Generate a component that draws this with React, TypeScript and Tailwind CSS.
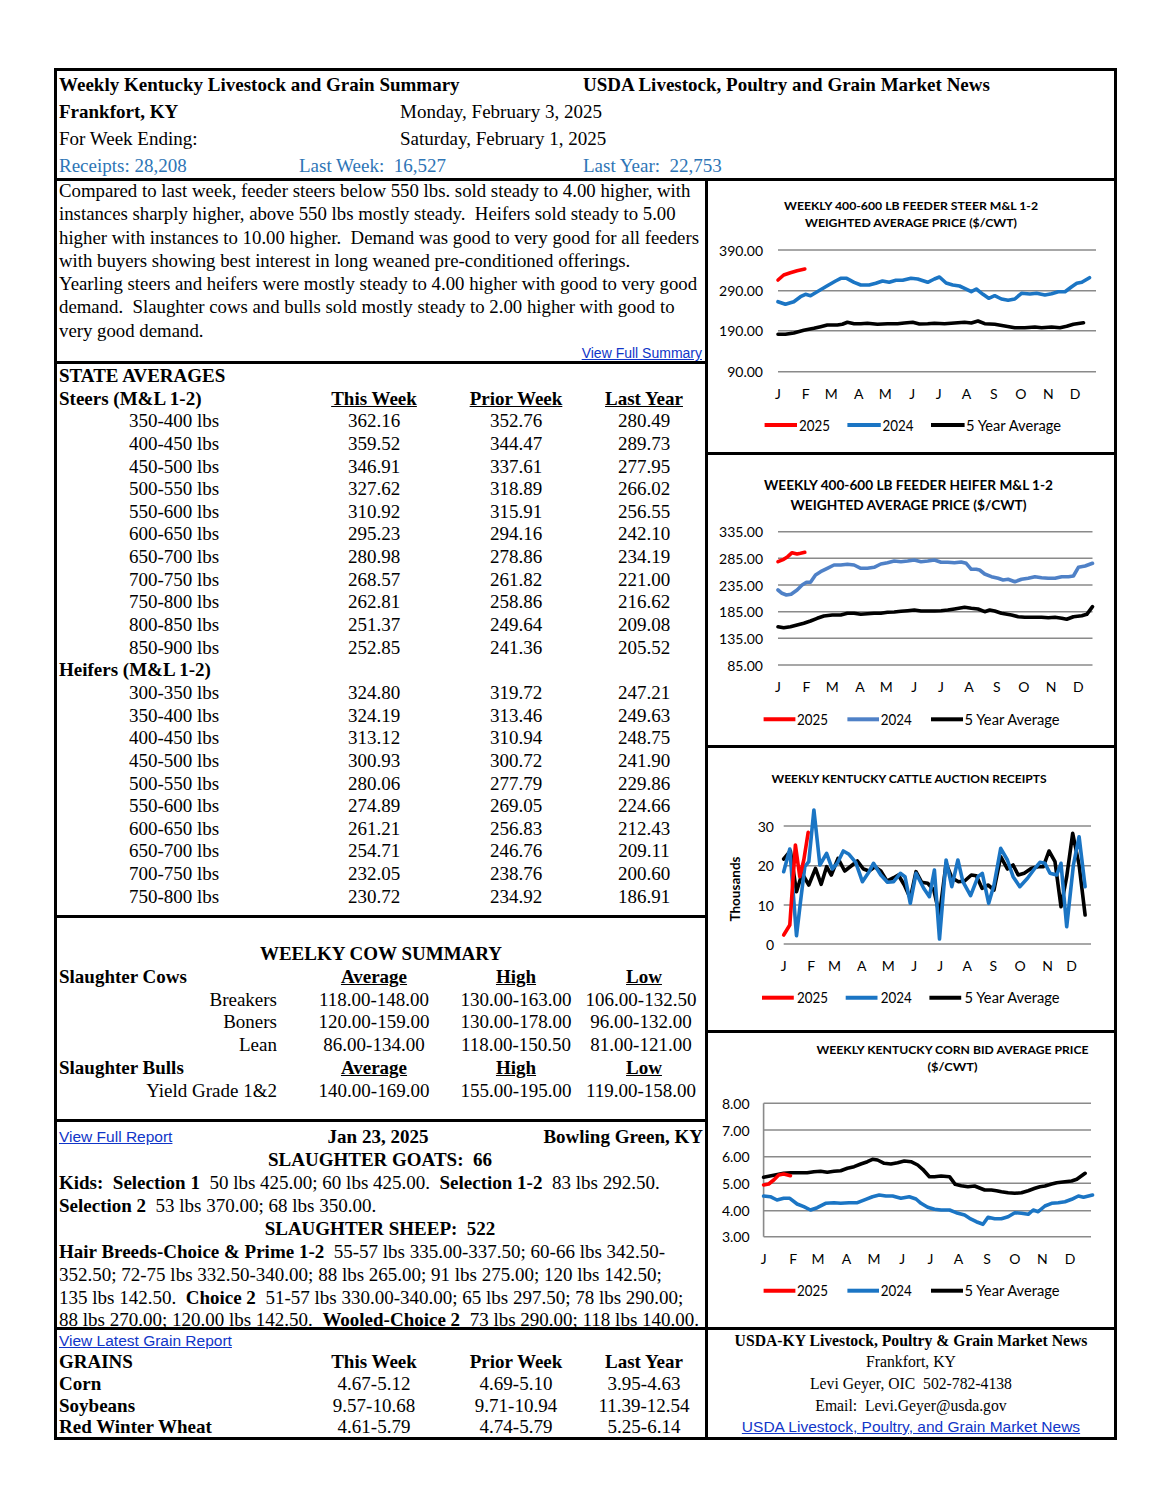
import React from "react";

type Pt = [number, number];

const SX = 2.986;
const SY = 3;

function pts(list: Pt[], dx: number, dy: number) {
  return list.map(([x, y]) => `${(x / SX + dx).toFixed(1)},${(y / SY + dy).toFixed(1)}`).join(" ");
}

type ChartProps = {
  h: number;
  titles: { t: string; x: number; y: number; len: number; size: number }[];
  yLabels: { t: string; y: number }[];
  yRight: number;
  gridX1: number;
  gridX2: number;
  axisLine?: boolean;
  months: number[];
  monthY: number;
  legendY: number;
  legend: { red: number[]; blue: number[]; black: number[] };
  blueColor: string;
  red: Pt[];
  blue: Pt[];
  black: Pt[];
  dy: number;
  thousands?: boolean;
};

const MONTHS = ["J", "F", "M", "A", "M", "J", "J", "A", "S", "O", "N", "D"];
const FONT = "Lato, 'Open Sans', sans-serif";

function Chart(p: ChartProps) {
  const dx = -8;
  return (
    <svg width={406} height={p.h} viewBox={`0 0 406 ${p.h}`} style={{ display: "block", fontFamily: FONT }}>
      {p.titles.map((t, i) => (
        <text
          key={i}
          x={t.x}
          y={t.y}
          textAnchor="middle"
          dominantBaseline="central"
          fontSize={t.size}
          fontWeight={700}
          textLength={t.len}
          lengthAdjust="spacingAndGlyphs"
          fill="#000"
        >
          {t.t}
        </text>
      ))}
      {p.yLabels.map((l, i) => (
        <g key={i}>
          <line x1={p.gridX1} x2={p.gridX2} y1={l.y} y2={l.y} stroke="#8a8a8a" strokeWidth={1.6} />
          <text x={p.yRight} y={l.y} textAnchor="end" dominantBaseline="central" fontSize={14} fill="#000">
            {l.t}
          </text>
        </g>
      ))}
      {p.axisLine && (
        <line
          x1={p.gridX1}
          x2={p.gridX1}
          y1={p.yLabels[0].y}
          y2={p.yLabels[p.yLabels.length - 1].y}
          stroke="#8a8a8a"
          strokeWidth={1.6}
        />
      )}
      {p.thousands && (
        <text
          x={27}
          y={141}
          transform="rotate(-90 27 141)"
          textAnchor="middle"
          dominantBaseline="central"
          fontSize={13.5}
          fontWeight={700}
          fill="#000"
        >
          Thousands
        </text>
      )}
      {p.months.map((x, i) => (
        <text key={i} x={x} y={p.monthY} textAnchor="middle" dominantBaseline="central" fontSize={14} fill="#000">
          {MONTHS[i]}
        </text>
      ))}
      <polyline points={pts(p.black, dx, p.dy)} fill="none" stroke="#000" strokeWidth={3.6} strokeLinejoin="round" strokeLinecap="round" />
      <polyline points={pts(p.blue, dx, p.dy)} fill="none" stroke={p.blueColor} strokeWidth={3.6} strokeLinejoin="round" strokeLinecap="round" />
      <polyline points={pts(p.red, dx, p.dy)} fill="none" stroke="#ff0000" strokeWidth={3.6} strokeLinejoin="round" strokeLinecap="round" />
      {[
        { c: "#ff0000", v: p.legend.red, t: "2025", len: 31 },
        { c: p.blueColor, v: p.legend.blue, t: "2024", len: 31 },
        { c: "#000", v: p.legend.black, t: "5 Year Average", len: 95 },
      ].map((l, i) => (
        <g key={i}>
          <line x1={l.v[0]} x2={l.v[1]} y1={p.legendY} y2={p.legendY} stroke={l.c} strokeWidth={4} />
          <text
            x={l.v[2]}
            y={p.legendY}
            dominantBaseline="central"
            fontSize={14.5}
            fill="#000"
            textLength={l.len}
            lengthAdjust="spacingAndGlyphs"
          >
            {l.t}
          </text>
        </g>
      ))}
    </svg>
  );
}

const legA = { red: [56.6, 89, 91], blue: [139.4, 172.8, 174.5], black: [223, 256.6, 258] };
const legC = { red: [54, 85.8, 89], blue: [137.7, 169.5, 172.8], black: [221.4, 253.2, 256.6] };

const chart1: ChartProps = {
  h: 271,
  dy: -6,
  titles: [
    { t: "WEEKLY 400-600 LB FEEDER STEER M&L 1-2", x: 203, y: 24, len: 254, size: 12 },
    { t: "WEIGHTED AVERAGE PRICE ($/CWT)", x: 203, y: 41.3, len: 212, size: 12 },
  ],
  yLabels: [
    { t: "390.00", y: 69 },
    { t: "290.00", y: 109.7 },
    { t: "190.00", y: 149.7 },
    { t: "90.00", y: 190.7 },
  ],
  yRight: 55,
  gridX1: 70,
  gridX2: 388,
  months: [70, 97.8, 123.3, 150.7, 177.2, 204.3, 230.8, 258.6, 285.7, 312.8, 340.3, 367],
  monthY: 212,
  legendY: 244,
  legend: legA,
  blueColor: "#1b75c4",
  red: [[233, 315], [250, 300], [270, 293], [290, 287], [313, 282]],
  blue: [
    [233, 380], [255, 388], [280, 380], [300, 365], [315, 358], [330, 362], [350, 350], [380, 332], [405, 318], [420, 310],
    [438, 310], [460, 322], [480, 330], [505, 330], [525, 325], [545, 318], [565, 322], [585, 316], [605, 316], [630, 310],
    [650, 312], [680, 322], [700, 312], [715, 306], [735, 324], [755, 330], [775, 333], [790, 340], [810, 350], [825, 342],
    [845, 358], [862, 370], [880, 362], [900, 372], [920, 376], [940, 372], [960, 355], [985, 357], [1005, 355], [1030, 360],
    [1050, 356], [1070, 350], [1090, 350], [1110, 335], [1125, 325], [1140, 322], [1163, 308],
  ],
  black: [
    [233, 478], [255, 478], [280, 474], [310, 466], [340, 460], [360, 455], [380, 450], [410, 450], [425, 448], [440, 442],
    [460, 446], [480, 446], [500, 445], [530, 448], [560, 446], [590, 446], [610, 444], [635, 442], [655, 447], [680, 446],
    [700, 445], [730, 446], [760, 444], [790, 442], [810, 444], [830, 438], [850, 446], [880, 448], [910, 453], [940, 458],
    [970, 458], [1000, 456], [1020, 458], [1050, 456], [1075, 458], [1095, 454], [1115, 448], [1145, 443],
  ],
};

const chart2: ChartProps = {
  h: 290,
  dy: -5,
  titles: [
    { t: "WEEKLY 400-600 LB FEEDER HEIFER M&L 1-2", x: 200.5, y: 30, len: 289, size: 13 },
    { t: "WEIGHTED AVERAGE PRICE ($/CWT)", x: 200.5, y: 50, len: 236, size: 13 },
  ],
  yLabels: [
    { t: "335.00", y: 76.7 },
    { t: "285.00", y: 103.3 },
    { t: "235.00", y: 130 },
    { t: "185.00", y: 156.7 },
    { t: "135.00", y: 183.3 },
    { t: "85.00", y: 210 },
  ],
  yRight: 55,
  gridX1: 70,
  gridX2: 384.5,
  months: [70, 98.5, 124.3, 152, 178.2, 206.3, 233, 261, 288.7, 315.8, 343, 370.4],
  monthY: 231.7,
  legendY: 264.3,
  legend: { red: [55.6, 87.4, 89], blue: [139.4, 171, 172.8], black: [223, 255, 256.6] },
  blueColor: "#4f81c7",
  red: [[233, 335], [250, 328], [262, 320], [275, 308], [290, 312], [300, 310], [313, 307]],
  blue: [
    [233, 420], [245, 430], [258, 435], [272, 433], [290, 420], [305, 405], [318, 397], [330, 397], [345, 375], [360, 365],
    [380, 355], [400, 345], [420, 345], [440, 343], [460, 345], [480, 355], [500, 355], [520, 352], [540, 342], [560, 338],
    [580, 333], [600, 335], [620, 333], [640, 330], [660, 335], [680, 333], [700, 330], [720, 337], [740, 337], [760, 338],
    [780, 336], [795, 340], [810, 358], [825, 358], [835, 360], [850, 372], [870, 380], [890, 385], [905, 390], [920, 388],
    [940, 395], [960, 388], [980, 385], [1000, 380], [1020, 383], [1040, 385], [1060, 385], [1080, 380], [1100, 380],
    [1115, 378], [1130, 352], [1150, 348], [1172, 340],
  ],
  black: [
    [233, 530], [250, 533], [270, 530], [290, 525], [310, 520], [330, 513], [350, 505], [370, 498], [395, 495], [420, 495],
    [440, 490], [460, 490], [480, 493], [500, 491], [520, 490], [540, 490], [560, 487], [580, 486], [600, 484], [620, 482],
    [640, 480], [660, 483], [680, 483], [700, 483], [720, 482], [740, 480], [760, 477], [790, 472], [810, 475], [830, 477],
    [850, 485], [865, 480], [880, 483], [900, 490], [930, 495], [950, 500], [970, 502], [1000, 502], [1020, 502], [1040, 503],
    [1060, 502], [1080, 505], [1095, 508], [1115, 500], [1140, 497], [1155, 493], [1172, 470],
  ],
};

const chart3: ChartProps = {
  h: 282,
  dy: -3,
  titles: [{ t: "WEEKLY KENTUCKY CATTLE AUCTION RECEIPTS", x: 201, y: 30.3, len: 275, size: 12 }],
  yLabels: [
    { t: "30", y: 78 },
    { t: "20", y: 117.7 },
    { t: "10", y: 157 },
    { t: "0", y: 196 },
  ],
  yRight: 66,
  gridX1: 75.7,
  gridX2: 383,
  months: [75.7, 103.2, 126.6, 153.8, 180.2, 206.3, 232.1, 259.2, 285.4, 312.2, 339.6, 363.7],
  monthY: 217,
  legendY: 249.7,
  legend: legC,
  blueColor: "#1b75c4",
  thousands: true,
  red: [[250, 570], [268, 540], [285, 300], [298, 395], [310, 345], [323, 262]],
  blue: [
    [250, 380], [268, 312], [288, 572], [300, 470], [313, 365], [325, 350], [340, 195], [358, 360], [378, 325], [395, 372],
    [410, 355], [428, 318], [445, 328], [465, 352], [485, 410], [505, 380], [518, 355], [540, 390], [560, 412], [578, 410],
    [598, 385], [612, 395], [628, 475], [645, 385], [668, 430], [685, 455], [700, 375], [715, 582], [735, 345], [752, 425],
    [770, 345], [785, 410], [808, 452], [830, 395], [843, 385], [862, 475], [878, 420], [898, 310], [918, 345], [935, 395],
    [955, 425], [978, 400], [1000, 370], [1015, 352], [1030, 355], [1045, 385], [1065, 390], [1078, 355], [1095, 545],
    [1115, 360], [1132, 275], [1150, 425],
  ],
  black: [
    [250, 342], [270, 318], [288, 440], [305, 385], [325, 420], [345, 370], [362, 418], [378, 365], [392, 390], [412, 340],
    [432, 378], [455, 360], [470, 348], [488, 372], [505, 378], [522, 365], [540, 378], [558, 408], [578, 398], [592, 390],
    [610, 420], [628, 460], [645, 380], [662, 412], [680, 415], [698, 435], [715, 510], [735, 355], [752, 398], [772, 410],
    [790, 408], [810, 390], [825, 392], [842, 430], [860, 420], [878, 435], [898, 335], [918, 372], [935, 360], [950, 390],
    [968, 385], [990, 370], [1010, 365], [1025, 365], [1042, 318], [1060, 350], [1078, 485], [1095, 395], [1113, 265],
    [1132, 360], [1150, 510],
  ],
};

const chart4: ChartProps = {
  h: 294,
  dy: -3,
  titles: [
    { t: "WEEKLY KENTUCKY CORN BID AVERAGE PRICE", x: 244.5, y: 16, len: 272, size: 12 },
    { t: "($/CWT)", x: 244.5, y: 33.7, len: 50, size: 12 },
  ],
  yLabels: [
    { t: "8.00", y: 70.3 },
    { t: "7.00", y: 97 },
    { t: "6.00", y: 123.7 },
    { t: "5.00", y: 150.3 },
    { t: "4.00", y: 177.7 },
    { t: "3.00", y: 203.7 },
  ],
  yRight: 41.6,
  gridX1: 55.6,
  gridX2: 383,
  axisLine: true,
  months: [55.6, 85.1, 109.9, 138.4, 166.1, 194.3, 222.4, 250.5, 279, 306.8, 334.3, 362],
  monthY: 225.3,
  legendY: 257.7,
  legend: { red: [55.6, 87.4, 89], blue: [139.4, 171, 172.8], black: [223, 255, 256.6] },
  blueColor: "#1b75c4",
  red: [[190, 465], [205, 462], [220, 450], [235, 435], [250, 432], [270, 437]],
  blue: [
    [190, 498], [210, 500], [230, 510], [250, 505], [268, 505], [290, 522], [310, 530], [330, 540], [350, 533], [375, 520],
    [400, 518], [420, 520], [445, 518], [470, 518], [495, 508], [515, 500], [535, 495], [555, 498], [575, 498], [600, 505],
    [625, 500], [645, 507], [660, 520], [680, 532], [700, 538], [720, 540], [745, 540], [765, 548], [790, 555], [805, 565],
    [825, 575], [845, 583], [860, 562], [880, 566], [900, 566], [920, 560], [940, 548], [960, 550], [980, 553], [995, 540],
    [1010, 545], [1030, 528], [1050, 520], [1070, 518], [1090, 515], [1110, 508], [1130, 498], [1145, 502], [1172, 495],
  ],
  black: [
    [190, 442], [220, 436], [250, 430], [270, 428], [300, 428], [320, 428], [340, 425], [360, 424], [380, 427], [400, 424],
    [420, 422], [440, 415], [460, 410], [480, 402], [500, 395], [515, 388], [530, 390], [550, 400], [570, 402], [590, 398],
    [610, 393], [630, 395], [650, 405], [665, 418], [685, 440], [700, 440], [720, 438], [745, 440], [762, 463], [780, 467],
    [800, 470], [820, 468], [835, 474], [850, 480], [870, 480], [885, 482], [900, 485], [920, 488], [940, 490], [960, 488],
    [980, 482], [1000, 475], [1015, 470], [1030, 468], [1050, 462], [1065, 458], [1090, 455], [1110, 453], [1125, 448],
    [1150, 430],
  ],
};

const steers = [
  ["350-400 lbs", "362.16", "352.76", "280.49"],
  ["400-450 lbs", "359.52", "344.47", "289.73"],
  ["450-500 lbs", "346.91", "337.61", "277.95"],
  ["500-550 lbs", "327.62", "318.89", "266.02"],
  ["550-600 lbs", "310.92", "315.91", "256.55"],
  ["600-650 lbs", "295.23", "294.16", "242.10"],
  ["650-700 lbs", "280.98", "278.86", "234.19"],
  ["700-750 lbs", "268.57", "261.82", "221.00"],
  ["750-800 lbs", "262.81", "258.86", "216.62"],
  ["800-850 lbs", "251.37", "249.64", "209.08"],
  ["850-900 lbs", "252.85", "241.36", "205.52"],
];
const heifers = [
  ["300-350 lbs", "324.80", "319.72", "247.21"],
  ["350-400 lbs", "324.19", "313.46", "249.63"],
  ["400-450 lbs", "313.12", "310.94", "248.75"],
  ["450-500 lbs", "300.93", "300.72", "241.90"],
  ["500-550 lbs", "280.06", "277.79", "229.86"],
  ["550-600 lbs", "274.89", "269.05", "224.66"],
  ["600-650 lbs", "261.21", "256.83", "212.43"],
  ["650-700 lbs", "254.71", "246.76", "209.11"],
  ["700-750 lbs", "232.05", "238.76", "200.60"],
  ["750-800 lbs", "230.72", "234.92", "186.91"],
];

const grid = "grid grid-cols-[234px_166px_118px_138px]";

function Row({ r }: { r: string[] }) {
  return (
    <div className={`${grid} h-[22.65px] leading-[22.65px]`}>
      <div className="text-center">{r[0]}</div>
      <div className="text-center">{r[1]}</div>
      <div className="text-center">{r[2]}</div>
      <div className="text-center">{r[3]}</div>
    </div>
  );
}

const link = "font-['Liberation_Sans',Arial,sans-serif] text-[#1035c8] underline";

export default function App() {
  return (
    <div className="bg-white w-[1159px] h-[1500px] pt-[68px] pl-[54px] font-['Liberation_Serif','Times_New_Roman',serif] text-black text-[19px]">
      <div className="w-[1063px] border-[3px] border-black">
        {/* Header */}
        <div className="h-[110px] border-b-[3px] border-black pl-[2px] leading-[27px]">
          <div className="flex h-[27px] font-bold">
            <div className="w-[524px]">Weekly Kentucky Livestock and Grain Summary</div>
            <div>USDA Livestock, Poultry and Grain Market News</div>
          </div>
          <div className="flex h-[27px]">
            <div className="w-[341px] font-bold">Frankfort, KY</div>
            <div>Monday, February 3, 2025</div>
          </div>
          <div className="flex h-[27px]">
            <div className="w-[341px]">For Week Ending:</div>
            <div>Saturday, February 1, 2025</div>
          </div>
          <div className="flex h-[26px] text-[#2e75b6] whitespace-pre">
            <div className="w-[240px]">Receipts: 28,208</div>
            <div className="w-[284px]">Last Week:  16,527</div>
            <div>Last Year:  22,753</div>
          </div>
        </div>

        <div className="flex">
          {/* Left column */}
          <div className="w-[651px] border-r-[3px] border-black">
            <div className="h-[185px] border-b-[3px] border-black pl-[2px] leading-[23.3px] whitespace-nowrap">
              <div className="-mt-[2px] text-[18.8px]">
                <div>Compared to last week, feeder steers below 550 lbs. sold steady to 4.00 higher, with</div>
                <div className="whitespace-pre">instances sharply higher, above 550 lbs mostly steady.  Heifers sold steady to 5.00</div>
                <div className="whitespace-pre">higher with instances to 10.00 higher.  Demand was good to very good for all feeders</div>
                <div>with buyers showing best interest in long weaned pre-conditioned offerings.</div>
                <div>Yearling steers and heifers were mostly steady to 4.00 higher with good to very good</div>
                <div className="whitespace-pre">demand.  Slaughter cows and bulls sold mostly steady to 2.00 higher with good to</div>
                <div>very good demand.</div>
              </div>
              <div className="text-right pr-[3px] text-[14px] leading-[16px] mt-[3px]">
                <span className={link}>View Full Summary</span>
              </div>
            </div>

            <div className="h-[554px] border-b-[3px] border-black pt-[1px]">
              <div className="h-[22.65px] leading-[22.65px] pl-[2px] font-bold">STATE AVERAGES</div>
              <div className={`${grid} h-[22.65px] leading-[22.65px] font-bold`}>
                <div className="pl-[2px]">Steers (M&amp;L 1-2)</div>
                <div className="text-center"><span className="underline">This Week</span></div>
                <div className="text-center"><span className="underline">Prior Week</span></div>
                <div className="text-center"><span className="underline">Last Year</span></div>
              </div>
              {steers.map((r, i) => (
                <Row key={i} r={r} />
              ))}
              <div className="h-[22.65px] leading-[22.65px] pl-[2px] font-bold">Heifers (M&amp;L 1-2)</div>
              {heifers.map((r, i) => (
                <Row key={i} r={r} />
              ))}
            </div>

            <div className="h-[204px] border-b-[3px] border-black pt-[25px] leading-[22.8px]">
              <div className="text-center font-bold h-[22.8px]">WEELKY COW SUMMARY</div>
              <div className={`${grid} font-bold h-[22.8px]`}>
                <div className="pl-[2px]">Slaughter Cows</div>
                <div className="text-center"><span className="underline">Average</span></div>
                <div className="text-center"><span className="underline">High</span></div>
                <div className="text-center"><span className="underline">Low</span></div>
              </div>
              {[
                ["Breakers", "118.00-148.00", "130.00-163.00", "106.00-132.50"],
                ["Boners", "120.00-159.00", "130.00-178.00", "96.00-132.00"],
                ["Lean", "86.00-134.00", "118.00-150.50", "81.00-121.00"],
              ].map((r, i) => (
                <div key={i} className={`${grid} h-[22.8px]`}>
                  <div className="text-right pr-[14px]">{r[0]}</div>
                  <div className="text-center">{r[1]}</div>
                  <div className="text-center">{r[2]}</div>
                  <div className="text-center pr-[6px]">{r[3]}</div>
                </div>
              ))}
              <div className={`${grid} font-bold h-[22.8px]`}>
                <div className="pl-[2px]">Slaughter Bulls</div>
                <div className="text-center"><span className="underline">Average</span></div>
                <div className="text-center"><span className="underline">High</span></div>
                <div className="text-center"><span className="underline">Low</span></div>
              </div>
              <div className={`${grid} h-[22.8px]`}>
                <div className="text-right pr-[14px]">Yield Grade 1&amp;2</div>
                <div className="text-center">140.00-169.00</div>
                <div className="text-center">155.00-195.00</div>
                <div className="text-center pr-[6px]">119.00-158.00</div>
              </div>
            </div>

            <div className="h-[203px] pl-[2px] pt-[3px] leading-[23px] whitespace-pre">
              <div className="flex items-center h-[23px] pr-[2px]">
                <div className="w-[230px] text-[15.5px] leading-[23px]">
                  <span className={link}>View Full Report</span>
                </div>
                <div className="w-[178px] text-center font-bold">Jan 23, 2025</div>
                <div className="flex-1 text-right font-bold">Bowling Green, KY</div>
              </div>
              <div className="text-center font-bold pr-[4px]">SLAUGHTER GOATS:  66</div>
              <div>
                <b>Kids:  Selection 1</b>  50 lbs 425.00; 60 lbs 425.00.  <b>Selection 1-2</b>  83 lbs 292.50.
              </div>
              <div>
                <b>Selection 2</b>  53 lbs 370.00; 68 lbs 350.00.
              </div>
              <div className="text-center font-bold pr-[4px]">SLAUGHTER SHEEP:  522</div>
              <div>
                <b>Hair Breeds-Choice &amp; Prime 1-2</b>  55-57 lbs 335.00-337.50; 60-66 lbs 342.50-
              </div>
              <div>352.50; 72-75 lbs 332.50-340.00; 88 lbs 265.00; 91 lbs 275.00; 120 lbs 142.50;</div>
              <div>
                135 lbs 142.50.  <b>Choice 2</b>  51-57 lbs 330.00-340.00; 65 lbs 297.50; 78 lbs 290.00;
              </div>
              <div className="h-[20px] leading-[21px]">
                88 lbs 270.00; 120.00 lbs 142.50.  <b>Wooled-Choice 2</b>  73 lbs 290.00; 118 lbs 140.00.
              </div>
            </div>
          </div>

          {/* Right column */}
          <div className="w-[406px]">
            <div className="h-[274px] border-b-[3px] border-black">
              <Chart {...chart1} />
            </div>
            <div className="h-[293px] border-b-[3px] border-black">
              <Chart {...chart2} />
            </div>
            <div className="h-[285px] border-b-[3px] border-black">
              <Chart {...chart3} />
            </div>
            <div className="h-[294px]">
              <Chart {...chart4} />
            </div>
          </div>
        </div>

        {/* Bottom row */}
        <div className="flex border-t-[3px] border-black h-[110px]">
          <div className="w-[651px] border-r-[3px] border-black">
            <div className="h-[21px] leading-[21px] pl-[2px] text-[15.5px]">
              <span className={link}>View Latest Grain Report</span>
            </div>
            <div className={`${grid} h-[22px] leading-[22px] font-bold`}>
              <div className="pl-[2px]">GRAINS</div>
              <div className="text-center">This Week</div>
              <div className="text-center">Prior Week</div>
              <div className="text-center">Last Year</div>
            </div>
            {[
              ["Corn", "4.67-5.12", "4.69-5.10", "3.95-4.63"],
              ["Soybeans", "9.57-10.68", "9.71-10.94", "11.39-12.54"],
              ["Red Winter Wheat", "4.61-5.79", "4.74-5.79", "5.25-6.14"],
            ].map((r, i) => (
              <div key={i} className={`${grid} ${i === 2 ? "h-[20px] leading-[20px]" : "h-[22px] leading-[22px]"}`}>
                <div className="pl-[2px] font-bold">{r[0]}</div>
                <div className="text-center">{r[1]}</div>
                <div className="text-center">{r[2]}</div>
                <div className="text-center">{r[3]}</div>
              </div>
            ))}
          </div>
          <div className="w-[406px] text-center text-[15.7px] whitespace-pre">
            <div className="h-[21px] leading-[21px] font-bold">USDA-KY Livestock, Poultry &amp; Grain Market News</div>
            <div className="h-[22px] leading-[22px]">Frankfort, KY</div>
            <div className="h-[22px] leading-[22px]">Levi Geyer, OIC  502-782-4138</div>
            <div className="h-[22px] leading-[22px]">Email:  Levi.Geyer@usda.gov</div>
            <div className="h-[20px] leading-[20px] text-[15.5px]">
              <span className={link}>USDA Livestock, Poultry, and Grain Market News</span>
            </div>
          </div>
        </div>
      </div>
    </div>
  );
}
